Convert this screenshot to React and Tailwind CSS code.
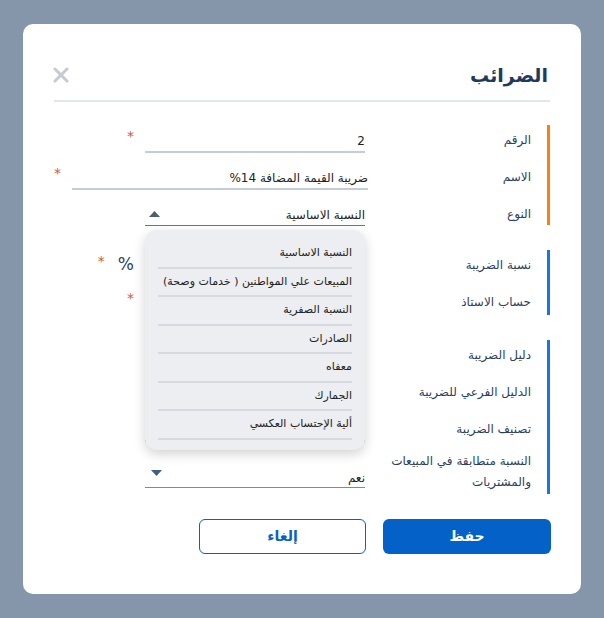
import React from "react";

const typeOptions = [
  "النسبة الاساسية",
  "المبيعات علي المواطنين ( خدمات وصحة)",
  "النسبة الصفرية",
  "الصادرات",
  "معفاه",
  "الجمارك",
  "ألية الإحتساب العكسي",
];

const Star = () => (
  <span className="text-[#d0583f] text-[14px] leading-none self-start mt-[4px]">*</span>
);

const Row = ({ label, height = "h-[37px]", children }) => (
  <div className={`flex ${height}`}>
    <div className="w-[182px] pr-[16px] pt-[6px] text-[12px] leading-[18px] text-[#2a3f60]">
      {label}
    </div>
    <div className="flex items-start gap-[11px]">{children}</div>
  </div>
);

const Field = ({ value, width = "w-[220px]" }) => (
  <div
    className={`${width} h-[28px] pt-[7px] border-b-2 border-[#c4ccd6] text-[12px] leading-[18px] text-[#222]`}
  >
    {value}
  </div>
);

const Caret = ({ up, color }) => (
  <svg width="11" height="6" viewBox="0 0 11 6">
    {up ? (
      <path d="M5.5 0 L11 6 L0 6 Z" fill={color} />
    ) : (
      <path d="M0 0 L11 0 L5.5 6 Z" fill={color} />
    )}
  </svg>
);

const App = () => {
  return (
    <div className="min-h-screen bg-[#8596ab] flex justify-center pt-[24px] font-['DejaVu_Sans',sans-serif]">
      <div
        dir="rtl"
        className="w-[558px] h-[570px] bg-white rounded-[10px] px-[31px] pt-[36px]"
      >
        {/* Header */}
        <div className="flex items-center justify-between h-[30px] pr-[2px]">
          <h1 className="text-[19px] font-semibold text-[#1e3a5f]">الضرائب</h1>
          <svg width="16" height="16" viewBox="0 0 16 16" className="ml-[-1px]">
            <path
              d="M2 2 L14 14 M14 2 L2 14"
              stroke="#c6cbd3"
              strokeWidth="3"
              strokeLinecap="round"
            />
          </svg>
        </div>
        <div className="mt-[10px] h-[2px] bg-[#e3e7eb]" />

        {/* Group 1 */}
        <div className="mt-[23px] border-r-[3px] border-[#ff7f0e]">
          <Row label="الرقم">
            <Field value="2" />
            <Star />
          </Row>
          <Row label="الاسم">
            <Field value="ضريبة القيمة المضافة 14%" width="w-[296px]" />
            <Star />
          </Row>
          <Row label="النوع" height="h-[26px]">
            <div className="relative w-[220px] h-[27px] pt-[7px] border-b border-[#6b7583] flex justify-between items-start text-[12px] leading-[18px] text-[#222]">
              <span>النسبة الاساسية</span>
              <span className="mt-[5px] ml-[4px]">
                <Caret up color="#4d5d72" />
              </span>
              {/* open dropdown */}
              <div className="absolute top-[31px] left-0 w-[220px] h-[220px] bg-[#eceef2] rounded-[12px] shadow-[0_4px_12px_rgba(0,0,0,0.18)] px-[13px] pt-[10px] z-10">
                {typeOptions.map((opt) => (
                  <div
                    key={opt}
                    className="h-[28.5px] flex items-center whitespace-nowrap border-b-2 border-[#d6dae0] text-[11px] text-[#222]"
                  >
                    {opt}
                  </div>
                ))}
              </div>
            </div>
          </Row>
        </div>

        {/* Group 2 */}
        <div className="mt-[25px] border-r-[3px] border-[#1a73e8]">
          <Row label="نسبة الضريبة">
            <Field value="" />
            <span className="text-[17px] leading-none text-[#2a3f60] mt-[6px] ml-[2px]">%</span>
            <Star />
          </Row>
          <Row label="حساب الاستاذ" height="h-[28px]">
            <Field value="" />
            <Star />
          </Row>
        </div>

        {/* Group 3 */}
        <div className="mt-[25px] border-r-[3px] border-[#1a73e8]">
          <Row label="دليل الضريبة">
            <Field value="" />
          </Row>
          <Row label="الدليل الفرعي للضريبة">
            <Field value="" />
          </Row>
          <Row label="تصنيف الضريبة">
            <Field value="" />
          </Row>
          <Row
            label={
              <span className="block leading-[21px] -mt-[6px]">
                النسبة متطابقة في المبيعات والمشتريات
              </span>
            }
            height="h-[43px]"
          >
            <div className="w-[220px] h-[37px] pt-[18px] border-b border-[#6f8db3] flex justify-between items-start text-[12px] leading-[18px] text-[#222]">
              <span>نعم</span>
              <span className="mt-[1px] ml-[6px]">
                <Caret color="#3f5f8a" />
              </span>
            </div>
          </Row>
        </div>

        {/* Actions */}
        <div className="mt-[25px] flex gap-[17px] -mr-[1px]">
          <button className="w-[168px] h-[35px] rounded-[6px] bg-[#0461c7] text-white text-[14px] font-bold">
            حفظ
          </button>
          <button className="w-[167px] h-[35px] rounded-[6px] border border-[#0a5fc4] text-[#0a5fc4] text-[14px] font-bold">
            إلغاء
          </button>
        </div>
      </div>
    </div>
  );
};

export default App;
